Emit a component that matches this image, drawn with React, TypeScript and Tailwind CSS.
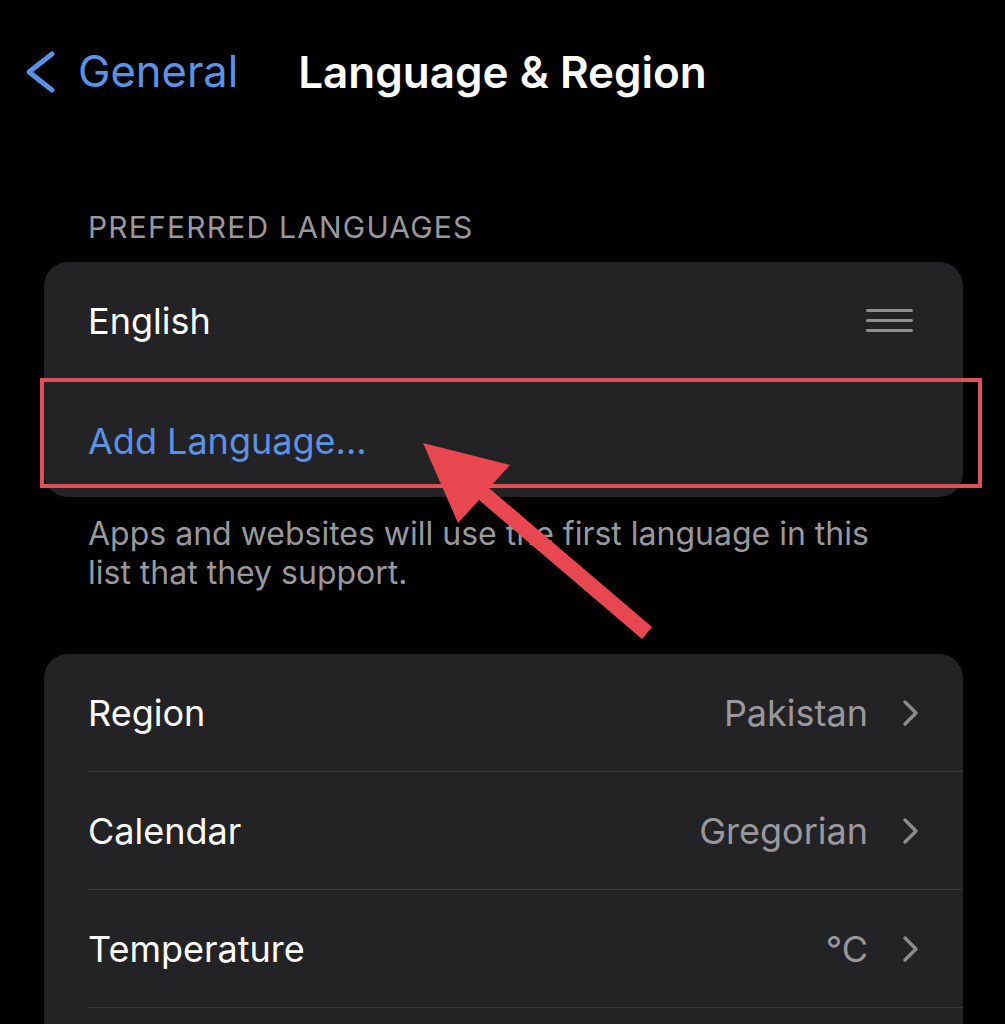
interface SettingRow {
  label: string;
  value: string;
}

const rows: SettingRow[] = [
  { label: "Region", value: "Pakistan" },
  { label: "Calendar", value: "Gregorian" },
  { label: "Temperature", value: "°C" },
];

function Chevron() {
  return (
    <svg width="17" height="28" viewBox="0 0 17 28" className="ml-[34px]">
      <polyline points="3,3 14,14 3,25" fill="none" stroke="#8a8a8e" strokeWidth="3.4" strokeLinecap="round" strokeLinejoin="round" />
    </svg>
  );
}

export default function App() {
  return (
    <div
      className="relative w-[1005px] h-[1024px] overflow-hidden bg-black text-white"
      style={{ fontFamily: "Inter, 'Noto Sans', sans-serif" }}
    >
      {/* Nav bar */}
      <div className="h-[144px] flex items-center">
        <div className="flex items-center pl-[24px] text-[#5c92e6]">
          <svg width="32" height="44" viewBox="0 0 32 44">
            <polyline points="28,4 5,22 28,40" fill="none" stroke="#5c92e6" strokeWidth="5" strokeLinecap="round" strokeLinejoin="round" />
          </svg>
          <span className="ml-[22px] text-[43.5px] leading-none">General</span>
        </div>
        <h1 className="ml-[60px] text-[44px] leading-none font-semibold">Language &amp; Region</h1>
      </div>

      {/* Preferred languages */}
      <div className="h-[118px] flex items-end pb-[17px] pl-[88px]">
        <p className="text-[30px] leading-[36px] text-[#98989d] tracking-[1.2px]">PREFERRED LANGUAGES</p>
      </div>

      <div className="relative ml-[44px] w-[919px] rounded-[24px] bg-[#232325]">
        <div className="h-[118px] flex items-center justify-between pl-[44px] pr-[50px] border-b border-[#38383a]">
          <span className="text-[36px]">English</span>
          <div className="flex flex-col gap-[7px]">
            <div className="w-[47px] h-[3px] rounded-full bg-[#8e8e93]" />
            <div className="w-[47px] h-[3px] rounded-full bg-[#8e8e93]" />
            <div className="w-[47px] h-[3px] rounded-full bg-[#8e8e93]" />
          </div>
        </div>
        <div className="h-[117px] flex items-center pl-[44px]">
          <span className="text-[36px] text-[#5c92e6] mt-[5px]">Add Language...</span>
        </div>
        {/* highlight box */}
        <div className="absolute left-[-4px] top-[116px] w-[942px] h-[110px] border-4 border-[#e0505a]" />
      </div>

      <p className="mt-[17px] pl-[88px] w-[900px] text-[32px] leading-[39px] text-[#98989d]">
        Apps and websites will use the first language in this list that they support.
      </p>

      {/* Region settings */}
      <div className="mt-[62px] ml-[44px] w-[919px] pb-[40px] rounded-[24px] bg-[#232325]">
        {rows.map((row) => (
          <div key={row.label} className="pl-[44px]">
            <div className="h-[118px] flex items-center justify-between pr-[44px] border-b border-[#38383a]">
              <span className="text-[36px]">{row.label}</span>
              <div className="flex items-center">
                <span className="text-[36px] text-[#98989d]">{row.value}</span>
                <Chevron />
              </div>
            </div>
          </div>
        ))}
      </div>

      {/* Annotation arrow */}
      <svg className="absolute inset-0 pointer-events-none" width="1005" height="1024" viewBox="0 0 1005 1024">
        <polygon
          points="423,443 510,465 489,488 652,627 642,639 479,500 458,523"
          fill="#e8474f"
        />
      </svg>
    </div>
  );
}
